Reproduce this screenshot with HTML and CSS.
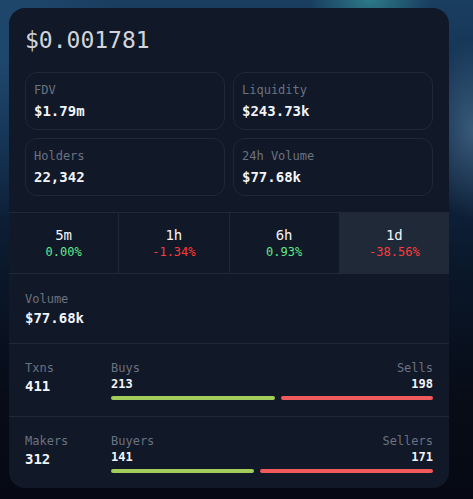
FILE: index.html
```html
<!DOCTYPE html>
<html lang="en">
<head>
    <meta charset="UTF-8">
    <meta name="viewport" content="width=device-width, initial-scale=1.0">
    <title>Token Stats</title>
    <link rel="stylesheet" href="styles.css">
</head>
<body>

    <!-- Token card -->
    <div class="card">
        <div class="top">
            <div class="price">$0.001781</div>

            <div class="stats">
                <div class="stat">
                    <div class="label">FDV</div>
                    <div class="value">$1.79m</div>
                </div>
                <div class="stat">
                    <div class="label">Liquidity</div>
                    <div class="value">$243.73k</div>
                </div>
                <div class="stat">
                    <div class="label">Holders</div>
                    <div class="value">22,342</div>
                </div>
                <div class="stat">
                    <div class="label">24h Volume</div>
                    <div class="value">$77.68k</div>
                </div>
            </div>
        </div>

        <!-- Timeframes -->
        <div class="frames">
            <div class="frame">
                <div class="frame-name">5m</div>
                <div class="pct up">0.00%</div>
            </div>
            <div class="frame">
                <div class="frame-name">1h</div>
                <div class="pct down">-1.34%</div>
            </div>
            <div class="frame">
                <div class="frame-name">6h</div>
                <div class="pct up">0.93%</div>
            </div>
            <div class="frame active">
                <div class="frame-name">1d</div>
                <div class="pct down">-38.56%</div>
            </div>
        </div>

        <div class="volume">
            <div class="label">Volume</div>
            <div class="value">$77.68k</div>
        </div>

        <div class="split-row">
            <div class="split-total">
                <div class="label">Txns</div>
                <div class="total">411</div>
            </div>
            <div class="split">
                <div class="split-head">
                    <div>
                        <div class="label">Buys</div>
                        <div class="count">213</div>
                    </div>
                    <div class="right">
                        <div class="label">Sells</div>
                        <div class="count">198</div>
                    </div>
                </div>
                <div class="bars">
                    <div class="bar buy" style="flex: 213"></div>
                    <div class="bar sell" style="flex: 198"></div>
                </div>
            </div>
        </div>

        <div class="split-row">
            <div class="split-total">
                <div class="label">Makers</div>
                <div class="total">312</div>
            </div>
            <div class="split">
                <div class="split-head">
                    <div>
                        <div class="label">Buyers</div>
                        <div class="count">141</div>
                    </div>
                    <div class="right">
                        <div class="label">Sellers</div>
                        <div class="count">171</div>
                    </div>
                </div>
                <div class="bars">
                    <div class="bar buy" style="flex: 141"></div>
                    <div class="bar sell" style="flex: 171"></div>
                </div>
            </div>
        </div>
    </div>

</body>
</html>
```

FILE: styles.css
```css
html, body {
    height: 100%;
}

body {
    font-family: 'DejaVu Sans Mono', monospace;
    color: #f1f5f9;
    margin: 0;
    padding: 8px 0 0 9px;
    box-sizing: border-box;
    background:
        radial-gradient(ellipse 60px 40px at 370px 0px, rgba(60, 170, 170, 0.55), transparent),
        radial-gradient(ellipse 50px 90px at 473px 130px, rgba(90, 130, 160, 0.55), transparent),
        radial-gradient(ellipse 120px 160px at 0px 60px, rgba(40, 90, 130, 0.5), transparent),
        linear-gradient(to bottom, #1a3e60 0%, #112b4b 25%, #0a1729 55%, #070c17 80%, #060913 100%);
}

/* Card */
.card {
    width: 440px;
    height: 480px;
    background-color: #111827;
    border-radius: 16px;
    overflow: hidden;
}

.top {
    padding: 16px 16px 16px;
}

.price {
    font-size: 23px;
    line-height: 32px;
    color: #d1d5db;
    margin-bottom: 16px;
}

.stats {
    display: grid;
    grid-template-columns: 1fr 1fr;
    gap: 8px;
}

.stat {
    border: 1px solid #1f2937;
    border-radius: 12px;
    padding: 8px;
}

.label {
    font-size: 12px;
    line-height: 18px;
    color: #6b7280;
}

.value {
    font-size: 14px;
    line-height: 20px;
    font-weight: bold;
    margin-top: 2px;
}

/* Timeframes */
.frames {
    display: flex;
    border-top: 1px solid #1f2937;
    border-bottom: 1px solid #1f2937;
}

.frame {
    flex: 1;
    text-align: center;
    padding: 13px 0;
    border-right: 1px solid #1f2937;
}

.frame:last-child {
    border-right: none;
}

.frame.active {
    background-color: #1f2937;
}

.frame-name {
    font-size: 14px;
    line-height: 18px;
}

.pct {
    font-size: 12px;
    line-height: 16px;
}

.up {
    color: #5eea8c;
}

.down {
    color: #ff3b3b;
}

/* Volume */
.volume {
    padding: 16px 16px 15px;
    border-bottom: 1px solid #1f2937;
}

.volume .value {
    margin-top: 0;
}

/* Txns / Makers */
.split-row {
    display: flex;
    padding: 16px 16px 16px;
}

.split-row + .split-row {
    border-top: 1px solid #1f2937;
}

.split-row .label {
    line-height: 16px;
}

.split-total {
    width: 86px;
}

.total {
    font-size: 14px;
    line-height: 20px;
    font-weight: bold;
}

.split {
    flex: 1;
}

.split-head {
    display: flex;
    justify-content: space-between;
}

.right {
    text-align: right;
}

.count {
    font-size: 12px;
    line-height: 16px;
    font-weight: bold;
}

.bars {
    display: flex;
    gap: 6px;
    margin-top: 4px;
}

.bar {
    height: 4px;
    border-radius: 2px;
}

.buy {
    background-color: #a3cd5a;
}

.sell {
    background-color: #f05a5a;
}
```
